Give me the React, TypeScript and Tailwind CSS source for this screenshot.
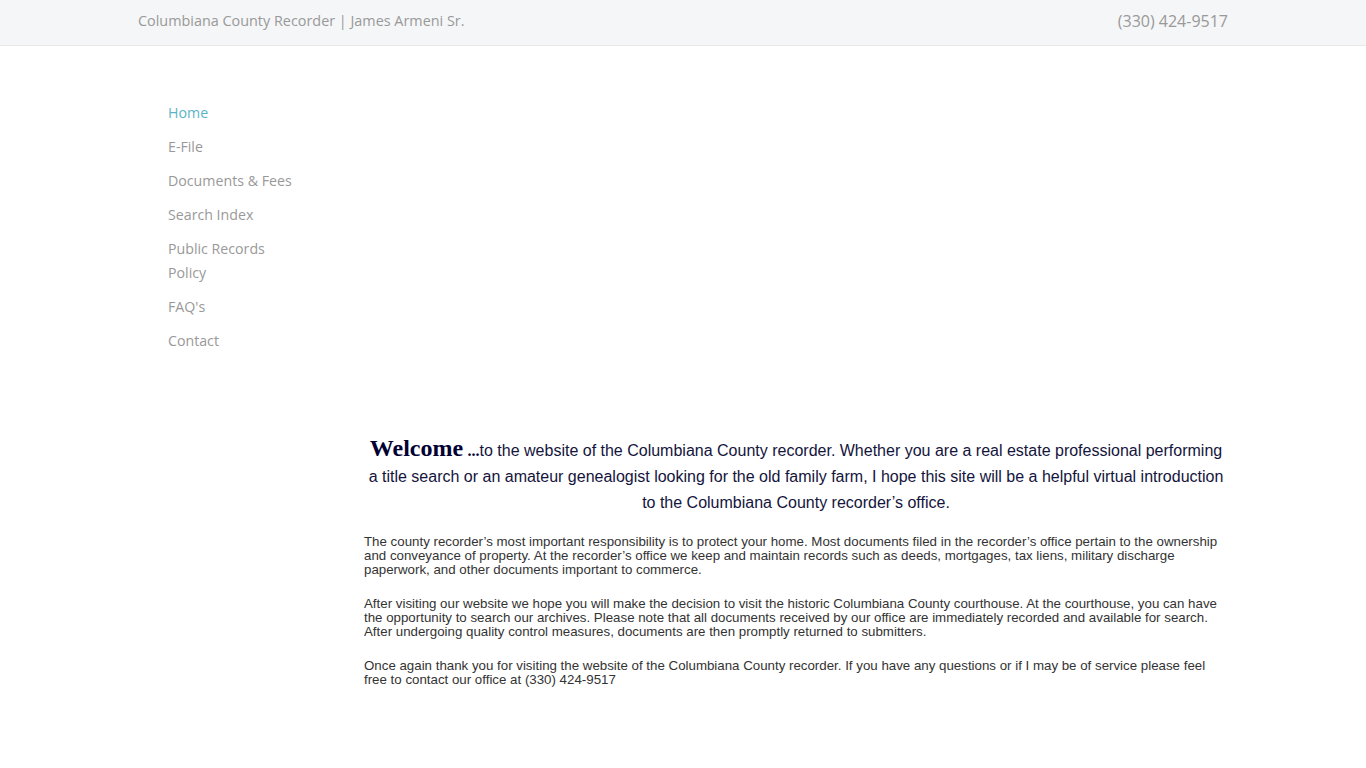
import React from 'react';

const navLinks = [
  { label: 'Home', active: true },
  { label: 'E-File' },
  { label: 'Documents & Fees' },
  { label: 'Search Index' },
  { label: 'Public Records Policy' },
  { label: "FAQ's" },
  { label: 'Contact' },
];

const paragraphs = [
  'The county recorder\u2019s most important responsibility is to protect your home. Most documents filed in the recorder\u2019s office pertain to the ownership and conveyance of property. At the recorder\u2019s office we keep and maintain records such as deeds, mortgages, tax liens, military discharge paperwork, and other documents important to commerce.',
  'After visiting our website we hope you will make the decision to visit the historic Columbiana County courthouse. At the courthouse, you can have the opportunity to search our archives. Please note that all documents received by our office are immediately recorded and available for search. After undergoing quality control measures, documents are then promptly returned to submitters.',
  'Once again thank you for visiting the website of the Columbiana County recorder. If you have any questions or if I may be of service please feel free to contact our office at (330) 424-9517',
];

function TopBar() {
  return (
    <div className="h-[46px] bg-[#f5f6f7] border-b border-[#e6e7e9]">
      <div className="w-[1090px] mx-auto h-full flex items-center justify-between pb-[3px] font-['Open_Sans',sans-serif] text-[#999]">
        <span className="text-[14.4px]">Columbiana County Recorder | James Armeni Sr.</span>
        <span className="text-[16px]">(330) 424-9517</span>
      </div>
    </div>
  );
}

function SideNav() {
  return (
    <nav className="w-[226px] shrink-0 pl-[30px] pt-[55px]">
      <ul className="w-[130px] flex flex-col gap-[10px] font-['Open_Sans',sans-serif] text-[14.2px] leading-[24px]">
        {navLinks.map((link) => (
          <li key={link.label}>
            <a
              href="#"
              className={link.active ? 'text-[#5bb4c6]' : 'text-[#999]'}
            >
              {link.label}
            </a>
          </li>
        ))}
      </ul>
    </nav>
  );
}

export default function App() {
  return (
    <div className="min-h-[768px] bg-white">
      <TopBar />
      <div className="w-[1090px] mx-auto flex">
        <SideNav />
        <main className="flex-1 pt-[392px] pb-[80px]">
          <p className="text-center font-['Liberation_Sans',Arial,sans-serif] text-[16px] leading-[26px] text-[#14143c]">
            <span className="font-['Liberation_Serif',serif] font-bold text-[24px] leading-[20px] text-[#000033]">Welcome</span>{' '}
            <b className="font-['Liberation_Serif',serif] text-[#000033]">...</b>to the website of the Columbiana County recorder. Whether you are a real estate professional performing a title search or an amateur genealogist looking for the old family farm, I hope this site will be a helpful virtual introduction to the Columbiana County recorder&rsquo;s office.
          </p>
          <div className="mt-[19px] flex flex-col gap-[20px] font-['Liberation_Sans',Arial,sans-serif] text-[13.3px] leading-[14px] text-[#333]">
            {paragraphs.map((text, i) => (
              <p key={i}>{text}</p>
            ))}
          </div>
        </main>
      </div>
    </div>
  );
}
